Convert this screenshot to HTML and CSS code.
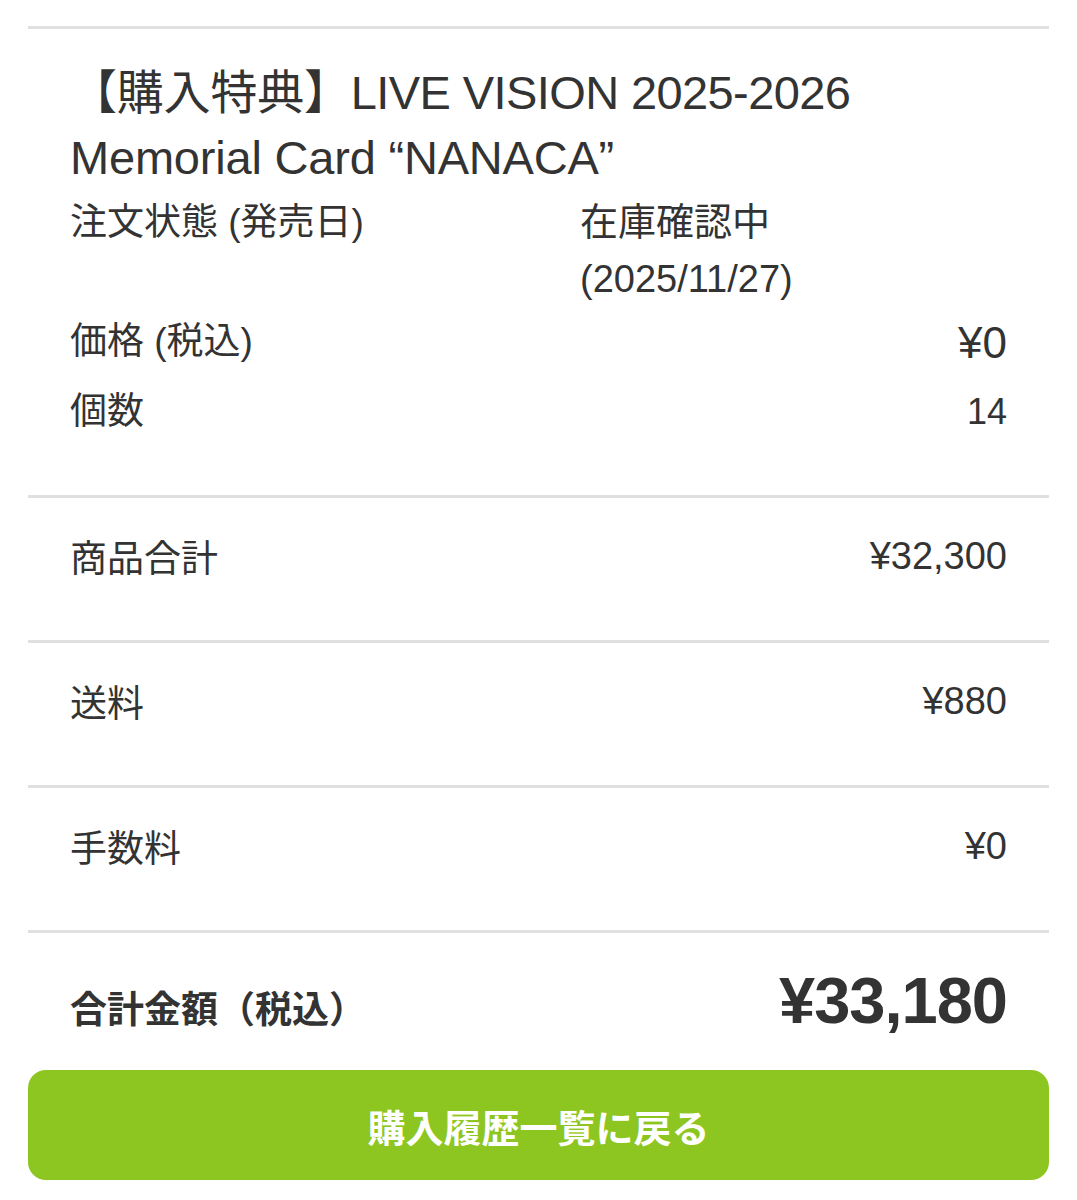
FILE: index.html
```html
<!DOCTYPE html>
<html lang="ja">
<head>
  <meta charset="UTF-8">
  <meta name="viewport" content="width=device-width, initial-scale=1.0">
  <title>購入履歴詳細</title>
  <link rel="stylesheet" href="styles.css">
</head>
<body>
  <div class="order">
    <!-- Item -->
    <section class="section item">
      <h2 class="item-title">【購入特典】<span class="title-latin">LIVE VISION 2025-2026</span> Memorial Card “NANACA”</h2>
      <div class="status">
        <span class="label">注文状態 (発売日)</span>
        <span class="status-value">在庫確認中<br>(2025/11/27)</span>
      </div>
      <div class="row price-row">
        <span class="label">価格 (税込)</span>
        <span class="price">¥0</span>
      </div>
      <div class="row qty-row">
        <span class="label">個数</span>
        <span class="qty">14</span>
      </div>
    </section>

    <!-- Summary -->
    <section class="section summary">
      <span class="label">商品合計</span>
      <span class="amount">¥32,300</span>
    </section>
    <section class="section summary">
      <span class="label">送料</span>
      <span class="amount">¥880</span>
    </section>
    <section class="section summary">
      <span class="label">手数料</span>
      <span class="amount">¥0</span>
    </section>

    <section class="section total">
      <span class="total-label">合計金額（税込）</span>
      <span class="total-amount">¥33,180</span>
    </section>

    <button class="back-btn">購入履歴一覧に戻る</button>
  </div>
</body>
</html>
```

FILE: styles.css
```css
body {
  margin: 0;
  background: #fff;
  color: #333;
  font-family: "Liberation Sans", "Noto Sans CJK JP", sans-serif;
}
.order {
  padding: 26px 28px 20px;
}
.section {
  border-top: 3px solid #e0e0e0;
  padding: 0 42px;
}

/* Item block */
.item {
  padding-top: 31px;
  padding-bottom: 50px;
}
.item-title {
  margin: 0 0 4px;
  font-size: 47px;
  font-weight: normal;
  line-height: 65px;
  letter-spacing: -0.2px;
}
.title-latin {
  letter-spacing: -0.6px;
}
.status {
  display: grid;
  grid-template-columns: 510px 1fr;
  font-size: 38px;
  line-height: 57px;
}
.label {
  font-size: 37px;
}
.row {
  display: flex;
  justify-content: space-between;
  align-items: baseline;
  line-height: 66px;
}
.price-row {
  margin-top: 2px;
}
.price-row .label {
  position: relative;
  top: -4px;
}
.price {
  font-size: 44px;
}
.qty {
  font-size: 36px;
}

/* Summary rows */
.summary {
  display: flex;
  justify-content: space-between;
  align-items: center;
  height: 50px;
  padding-top: 33px;
  padding-bottom: 59px;
}
.amount {
  font-size: 38px;
}

/* Total */
.total {
  display: flex;
  justify-content: space-between;
  align-items: baseline;
  height: 80px;
  padding-top: 28px;
  padding-bottom: 29px;
  line-height: 80px;
}
.total-label {
  font-size: 37px;
  font-weight: bold;
}
.total-amount {
  font-size: 65px;
  font-weight: bold;
  letter-spacing: -1px;
}

.back-btn {
  display: block;
  width: 100%;
  height: 110px;
  border: none;
  border-radius: 18px;
  background: #8dc621;
  color: #fff;
  font-family: inherit;
  font-size: 38px;
  font-weight: bold;
  cursor: pointer;
}
```
